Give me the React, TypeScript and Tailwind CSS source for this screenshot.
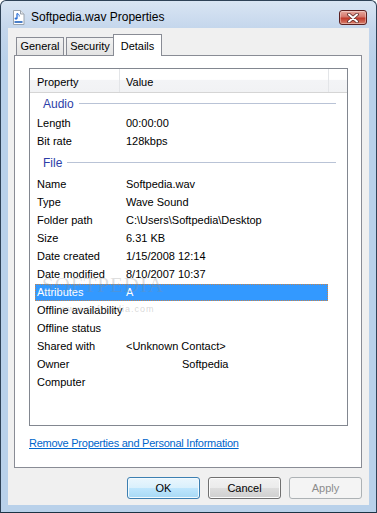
import React from "react";

const audio: [string, string][] = [
  ["Length", "00:00:00"],
  ["Bit rate", "128kbps"],
];

const file: [string, string][] = [
  ["Name", "Softpedia.wav"],
  ["Type", "Wave Sound"],
  ["Folder path", "C:\\Users\\Softpedia\\Desktop"],
  ["Size", "6.31 KB"],
  ["Date created", "1/15/2008 12:14"],
  ["Date modified", "8/10/2007 10:37"],
  ["Attributes", "A"],
  ["Offline availability", ""],
  ["Offline status", ""],
  ["Shared with", "<Unknown Contact>"],
  ["Owner", "Softpedia"],
  ["Computer", ""],
];

function FileIcon() {
  return (
    <svg width="14" height="15" viewBox="0 0 14 15">
      <path d="M1.5 0.5h7l3.5 3.5v10.5h-10.5z" fill="#fff" stroke="#9aa3ad" />
      <path d="M8.5 0.5v3.5h3.5" fill="#e8ecf0" stroke="#9aa3ad" />
      <path d="M5 3.5v5" stroke="#2a6fd6" strokeWidth="1.3" />
      <path d="M5 3.5c1.5 0.5 2.5 1.3 2.2 3" stroke="#2a6fd6" strokeWidth="1" fill="none" />
      <ellipse cx="4" cy="8.6" rx="1.5" ry="1.1" fill="#2a6fd6" />
      <rect x="2.5" y="11" width="8" height="2" fill="#4a7fc8" />
    </svg>
  );
}

function CloseButton() {
  return (
    <div className="flex h-[15px] w-[28px] items-center justify-center rounded-[3px] border border-[#5b2020] bg-[linear-gradient(#e8a99f,#d4776c_45%,#c0392b_55%,#d8826f)] shadow-[inset_0_0_0_1px_rgba(255,255,255,0.35)]">
      <svg width="12" height="10" viewBox="0 0 12 10">
        <path d="M2 1.5l8 7M10 1.5l-8 7" stroke="#5a2a28" strokeWidth="3.6" strokeLinecap="round" />
        <path d="M2 1.5l8 7M10 1.5l-8 7" stroke="#fff" strokeWidth="2" strokeLinecap="round" />
      </svg>
    </div>
  );
}

function Row({ k, v, selected }: { k: string; v: string; selected?: boolean }) {
  return (
    <div className="h-[18px] flex items-center">
      <div
        className={
          "ml-[5px] w-[293px] h-[17px] mt-[1px] flex items-center whitespace-nowrap " +
          (selected ? "bg-[#3399ff] text-white outline-1 outline-dotted outline-[#c8844a] -outline-offset-1" : "")
        }
      >
        <div className="w-[91px] pl-[2px] shrink-0">{k}</div>
        <div className={k === "Owner" ? "pl-[56px]" : ""}>{v}</div>
      </div>
    </div>
  );
}

function Group({ label, h }: { label: string; h: string }) {
  return (
    <div className={"flex items-center pl-[13px] pr-[11px] " + h}>
      <span className="text-[#2c3ea8] text-[12px]">{label}</span>
      <div className="ml-[5px] flex-1 h-px bg-[#b9c3d6]" />
    </div>
  );
}

function Btn({ label, kind }: { label: string; kind?: "focus" | "disabled" }) {
  const base = "w-[73px] h-[22px] rounded-[3px] border flex items-center justify-center text-[11px] ";
  if (kind === "disabled")
    return <div className={base + "border-[#adb2b5] bg-[#f4f4f4] text-[#8c8c8c]"}>{label}</div>;
  if (kind === "focus")
    return (
      <div className={base + "border-[#3c7fb1] bg-[linear-gradient(#eaf6fd,#d9f0fc_50%,#bee6fd_50%,#a7d9f5)] shadow-[inset_0_0_0_1px_#f2fafe] text-black"}>
        {label}
      </div>
    );
  return (
    <div className={base + "border-[#707070] bg-[linear-gradient(#f2f2f2,#ebebeb_50%,#dddddd_50%,#cfcfcf)] shadow-[inset_0_0_0_1px_#fcfcfc] text-black"}>
      {label}
    </div>
  );
}

export default function App() {
  return (
    <div className="w-[377px] h-[513px] bg-white font-['Liberation_Sans',Arial,sans-serif] text-[11px] text-black">
      <div className="w-full h-full flex flex-col rounded-t-[6px] border border-[#2f4257] border-b-[#1c3344] bg-[linear-gradient(#d9e5f3,#c4d6ec_28px,#b9d1ea_60px,#b9d1ea)]">
        {/* title bar */}
        <div className="h-[27px] flex items-start shrink-0">
          <div className="pl-[11px] pt-[9px]">
            <FileIcon />
          </div>
          <div className="ml-[5px] pt-[8px] text-[12px] leading-[16px]">Softpedia.wav Properties</div>
          <div className="ml-auto mr-[9px] pt-[9px]">
            <CloseButton />
          </div>
        </div>

        {/* client */}
        <div className="mx-[7px] h-[477px] bg-[#f0f0f0] flex flex-col">
          {/* tabs */}
          <div className="mt-[6px] h-[21px] flex items-end pl-[8px]">
            <div className="w-[48px] h-[18px] border border-b-0 border-[#898c95] bg-[linear-gradient(#f2f2f2,#e3e3e3)] flex items-center justify-center">
              General
            </div>
            <div className="ml-[2px] w-[48px] h-[18px] border border-b-0 border-[#898c95] bg-[linear-gradient(#f2f2f2,#e3e3e3)] flex items-center justify-center">
              Security
            </div>
            <div className="-ml-px -mb-px relative z-10 w-[49px] h-[22px] border border-b-0 border-[#898c95] bg-white flex items-start pt-[3px] justify-center">
              Details
            </div>
          </div>

          {/* panel */}
          <div className="ml-[6px] w-[348px] h-[413px] border border-[#898c95] bg-white pt-[12px] pl-[14px] flex flex-col">
            <div className="relative w-[319px] h-[358px] border border-[#828790] bg-white flex flex-col">
              <div className="h-[24px] flex border-b border-[#d5d5d5] bg-[linear-gradient(#ffffff,#ffffff_45%,#f3f4f6_50%,#f1f2f4)] shrink-0">
                <div className="w-[90px] pl-[7px] pt-[3px] flex items-center border-r border-[#e3e5e8]">Property</div>
                <div className="w-[209px] pl-[6px] pt-[3px] flex items-center border-r border-[#e3e5e8]">Value</div>
                <div className="flex-1" />
              </div>
              <Group label="Audio" h="h-[21px]" />
              {audio.map(([k, v]) => (
                <Row key={k} k={k} v={v} />
              ))}
              <Group label="File" h="h-[25px]" />
              {file.map(([k, v]) => (
                <Row key={k} k={k} v={v} selected={k === "Attributes"} />
              ))}
              {/* watermark */}
              <div className="absolute left-[12px] top-[201px] font-['Liberation_Serif',serif] text-[21px] tracking-[1px] text-[rgba(140,140,140,0.28)] pointer-events-none">
                SOFTPEDIA
              </div>
              <div className="absolute left-[30px] top-[234px] text-[9px] tracking-[1px] text-[rgba(140,140,140,0.35)] pointer-events-none">
                www.softpedia.com
              </div>
            </div>
            <div className="mt-[11px] text-[#0066cc] underline leading-[13px] tracking-[-0.25px]">
              Remove Properties and Personal Information
            </div>
          </div>

          {/* buttons */}
          <div className="mt-[9px] flex justify-end gap-[8px] pr-[7px]">
            <Btn label="OK" kind="focus" />
            <Btn label="Cancel" />
            <Btn label="Apply" kind="disabled" />
          </div>
        </div>
      </div>
    </div>
  );
}
